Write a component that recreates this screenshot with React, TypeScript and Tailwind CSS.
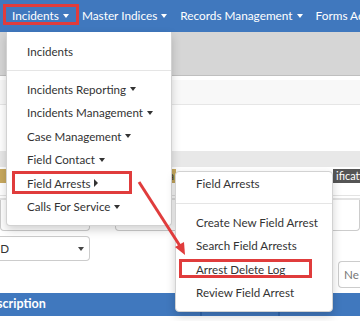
import React from "react";

const font = { fontFamily: 'Lato, "Liberation Sans", sans-serif' };

function Caret({ right }: { right?: boolean }) {
  return right ? (
    <span className="ml-[3px] inline-block h-0 w-0 border-y-[4px] border-l-[4px] border-y-transparent border-l-[#333]" />
  ) : (
    <span className="ml-[4px] inline-block h-0 w-0 border-x-[3.5px] border-t-[4px] border-x-transparent border-t-current align-middle" />
  );
}

function NavLink({ label }: { label: string }) {
  return (
    <div className="flex items-center px-[6.5px] text-white">
      <span>{label}</span>
      <Caret />
    </div>
  );
}

function Item({ label, caret }: { label: string; caret?: "down" | "right" }) {
  return (
    <div className="flex h-[23.5px] items-center pl-[20px] text-[#333]">
      <span>{label}</span>
      {caret === "down" && <Caret />}
      {caret === "right" && <Caret right />}
    </div>
  );
}

export default function App() {
  return (
    <div className="relative h-[321px] w-[360px] overflow-hidden bg-white text-[11.6px]" style={font}>
      {/* top navigation */}
      <nav className="flex h-[32px] items-center whitespace-nowrap bg-[#4078be] pl-[5.5px] text-[11.8px]">
        <NavLink label="Incidents" />
        <NavLink label="Master Indices" />
        <NavLink label="Records Management" />
        <NavLink label="Forms Admin" />
      </nav>

      {/* page behind the menus */}
      <div className="h-[44px] border-b border-[#bfbfbf] bg-[#d6d6d6]" />
      <div className="mt-[4px] h-[25px] border-b border-[#e6e6e6] bg-[#f8f8f8]" />
      <div className="h-[46px]" />
      <div className="h-[16px] bg-[#e8e8e8]" />
      <div className="mt-[2px] flex h-[14px] justify-between">
        <div className="flex w-[176px] justify-end bg-[#c8a95e] pr-[2px] text-[11px] leading-[14px] text-[#333]">a</div>
        <div className="w-[27px] overflow-hidden bg-[#555] pl-[3px] text-[11px] leading-[14px] text-white">ification</div>
      </div>
      <div className="mt-[12px] h-[4px] border-y border-[#e3e3e3]" />
      <div className="flex h-[32px] gap-[25px] border-t border-[#e3e3e3]">
        <div className="w-[90px] rounded-b border-x border-b border-[#ccc]" />
        <div className="flex-1 rounded-b border-x border-b border-[#ccc]" />
      </div>
      <div className="flex h-[62px] items-start justify-between pt-[5px]">
        <div className="flex h-[25px] w-[90px] items-center justify-between rounded-r border border-l-0 border-[#ccc] pr-[5px] text-[#333]">
          <span className="-ml-[3px]">ID</span>
          <span className="h-0 w-0 border-x-[3px] border-t-[4px] border-x-transparent border-t-[#444]" />
        </div>
        <div className="mt-[25px] flex h-[27px] w-[22px] items-center overflow-hidden rounded-l border border-r-0 border-[#ccc] pl-[5px] text-[#777]">
          Ne
        </div>
      </div>
      <div className="flex h-[23px] items-center bg-[#4078be] text-[12.5px] font-bold text-white">
        <div className="flex w-[200px] items-center justify-between pr-[8px]">
          <span className="-ml-[19px]">Description</span>
          <span className="text-[10px] font-normal text-[#a9c2e2]">⇅</span>
        </div>
        <div className="flex h-full w-[78px] items-center justify-between border-l-2 border-[#2f66ad] pl-[4px] pr-[6px]">
          <span>Sent On</span>
          <span className="text-[10px] font-normal text-[#a9c2e2]">⇅</span>
        </div>
        <div className="h-full border-l-2 border-[#2f66ad] pl-[4px] leading-[23px]">Actions</div>
      </div>

      {/* Incidents dropdown */}
      <div className="absolute left-[6px] top-[32px] w-[166px] rounded-b border border-t-0 border-[#d2d2d2] bg-white pb-[6px] pt-[8px] shadow-[0_4px_10px_rgba(0,0,0,0.18)]">
        <Item label="Incidents" />
        <div className="mb-[7px] mt-[6px] h-px bg-[#e5e5e5]" />
        <Item label="Incidents Reporting" caret="down" />
        <Item label="Incidents Management" caret="down" />
        <Item label="Case Management" caret="down" />
        <Item label="Field Contact" caret="down" />
        <Item label="Field Arrests" caret="right" />
        <Item label="Calls For Service" caret="down" />
      </div>

      {/* Field Arrests submenu */}
      <div className="absolute left-[175px] top-[171px] w-[158px] rounded border border-[#d2d2d2] bg-white pb-[6px] pt-0 shadow-[0_4px_10px_rgba(0,0,0,0.18)]">
        <Item label="Field Arrests" />
        <div className="my-[7px] h-px bg-[#e5e5e5]" />
        <Item label="Create New Field Arrest" />
        <Item label="Search Field Arrests" />
        <Item label="Arrest Delete Log" />
        <Item label="Review Field Arrest" />
      </div>

      {/* annotations */}
      <div className="absolute left-[3px] top-[4px] h-[21px] w-[76px] border-[3px] border-[#e03c3c]" />
      <div className="absolute left-[12px] top-[171px] h-[23px] w-[120px] border-[3px] border-[#e03c3c]" />
      <div className="absolute left-[179px] top-[259px] h-[19px] w-[133px] border-[3px] border-[#e03c3c]" />
      <svg className="absolute left-0 top-0" width="360" height="321">
        <line x1="139" y1="182" x2="180" y2="246" stroke="#e03c3c" strokeWidth="3" />
        <polygon points="185,255 175,247 184,242" fill="#e03c3c" />
      </svg>
    </div>
  );
}
